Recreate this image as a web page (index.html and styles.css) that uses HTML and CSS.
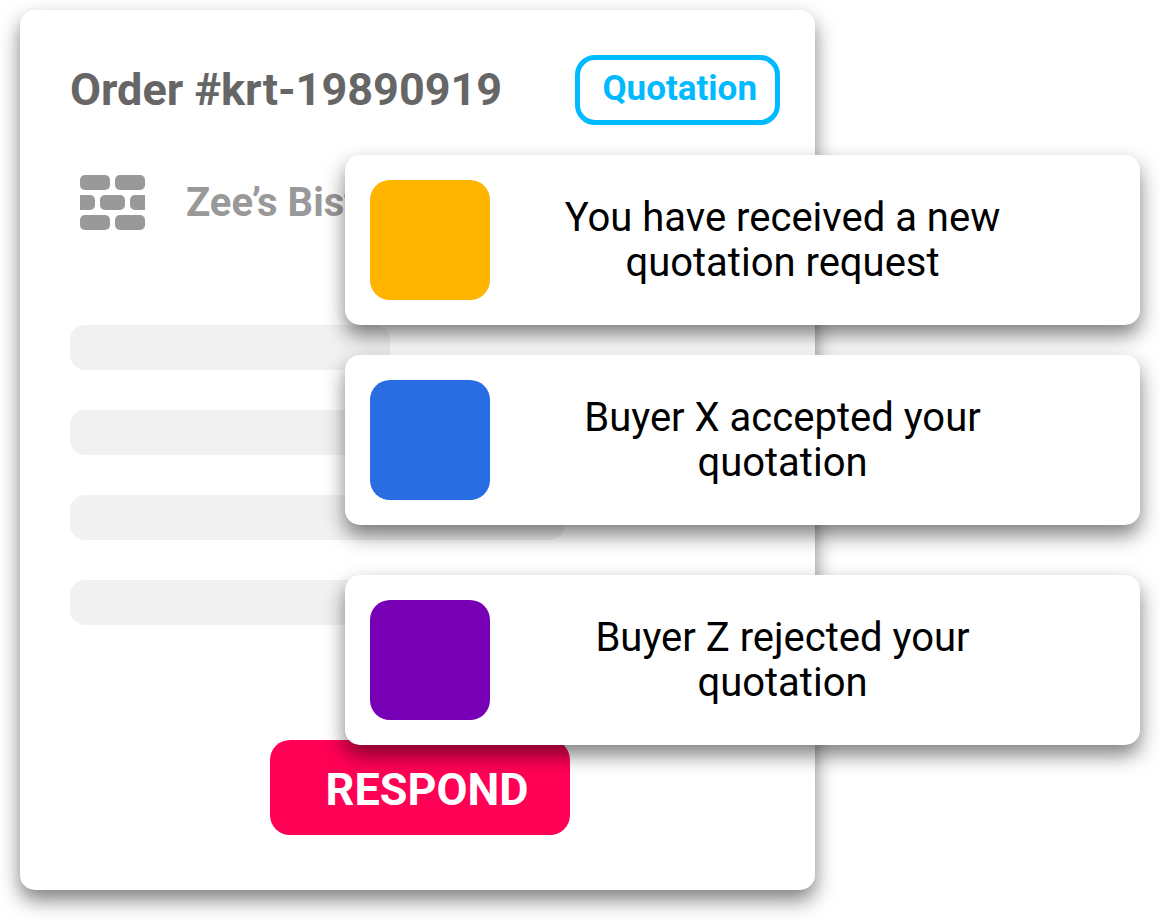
FILE: index.html
```
<!DOCTYPE html>
<html lang="en">
<head>
<meta charset="utf-8">
<meta name="viewport" content="width=device-width, initial-scale=1">
<title>Order #krt-19890919</title>
<link rel="stylesheet" href="styles.css">
</head>
<body>
<main class="stage">
  <article class="order">
    <header class="order-header">
      <h1 class="order-title">Order #krt-19890919</h1>
      <span class="badge">Quotation</span>
    </header>
    <div class="buyer">
      <svg class="buyer-icon" width="65" height="55" viewBox="0 0 65 55" fill="#999" aria-hidden="true">
        <rect width="30" height="15" rx="5"/>
        <rect x="35" width="30" height="15" rx="5"/>
        <path d="M0 20h10a5 5 0 0 1 5 5v5a5 5 0 0 1-5 5H0z"/>
        <rect x="20" y="20" width="25" height="15" rx="5"/>
        <path d="M65 20H55a5 5 0 0 0-5 5v5a5 5 0 0 0 5 5h10z"/>
        <rect y="40" width="30" height="15" rx="5"/>
        <rect x="35" y="40" width="30" height="15" rx="5"/>
      </svg>
      <h2 class="buyer-name">Zee’s Bistro</h2>
    </div>
    <div class="lines">
      <div class="line line-short"></div>
      <div class="line line-short"></div>
      <div class="line line-long"></div>
      <div class="line line-short"></div>
    </div>
    <button class="respond" type="button">RESPOND</button>
  </article>
  <section class="notices" aria-label="Notifications">
    <div class="notice">
      <div class="swatch swatch-new"></div>
      <p class="notice-text">You have received a new quotation request</p>
    </div>
    <div class="notice">
      <div class="swatch swatch-accepted"></div>
      <p class="notice-text">Buyer X accepted your quotation</p>
    </div>
    <div class="notice notice-apart">
      <div class="swatch swatch-rejected"></div>
      <p class="notice-text">Buyer Z rejected your quotation</p>
    </div>
  </section>
</main>
</body>
</html>
```
FILE: styles.css
```
* {
  box-sizing: border-box;
}

body {
  margin: 0;
  background: #fff;
  font-family: Roboto, "Liberation Sans", sans-serif;
}

h1,
h2,
p {
  margin: 0;
}

.stage {
  position: relative;
  padding: 10px 20px 30px;
  overflow: hidden;
}

.order {
  display: flex;
  flex-direction: column;
  margin-right: 325px;
  padding: 45px 35px 55px 50px;
  border-radius: 15px;
  background: #fff;
  box-shadow: 0 10px 20px rgba(0, 0, 0, 0.5);
}

.order-header {
  display: flex;
  align-items: center;
  justify-content: space-between;
}

.order-title {
  color: #666;
  font-size: 45px;
  font-weight: 700;
  line-height: 70px;
  white-space: nowrap;
}

.badge {
  padding: 0 18px 2px 22px;
  border: 5px solid #00baff;
  border-radius: 20px;
  color: #00baff;
  font-size: 35px;
  font-weight: 700;
  line-height: 58px;
}

.buyer {
  display: flex;
  align-items: center;
  gap: 41px;
  margin-top: 50px;
  padding-left: 10px;
}

.buyer-icon {
  flex: none;
}

.buyer-name {
  color: #999;
  font-size: 40px;
  font-weight: 700;
  line-height: 55px;
  white-space: nowrap;
}

.lines {
  display: grid;
  gap: 40px;
  margin-top: 95px;
}

.line {
  height: 45px;
  border-radius: 15px;
  background: #f1f1f1;
}

.line-short {
  width: 320px;
}

.line-long {
  width: 495px;
}

.respond {
  align-self: center;
  width: 300px;
  margin-top: 115px;
  margin-right: 10px;
  padding: 4px 0 0 14px;
  border: 0;
  border-radius: 20px;
  background: #ff0055;
  color: #fff;
  font-family: inherit;
  font-size: 45px;
  font-weight: 700;
  line-height: 91px;
}

.notices {
  position: absolute;
  top: 155px;
  right: 20px;
  left: 345px;
  display: grid;
  gap: 30px;
}

.notice {
  display: flex;
  align-items: center;
  padding: 25px;
  border-radius: 15px;
  background: #fff;
  box-shadow: 0 10px 20px rgba(0, 0, 0, 0.5);
}

.notice-apart {
  margin-top: 20px;
}

.swatch {
  flex: none;
  width: 120px;
  height: 120px;
  border-radius: 20px;
}

.swatch-new {
  background: #ffb400;
}

.swatch-accepted {
  background: #296de3;
}

.swatch-rejected {
  background: #7800b4;
}

.notice-text {
  flex: 1;
  padding: 0 79px 0 39px;
  color: #000;
  font-size: 40px;
  line-height: 45px;
  text-align: center;
}
```
